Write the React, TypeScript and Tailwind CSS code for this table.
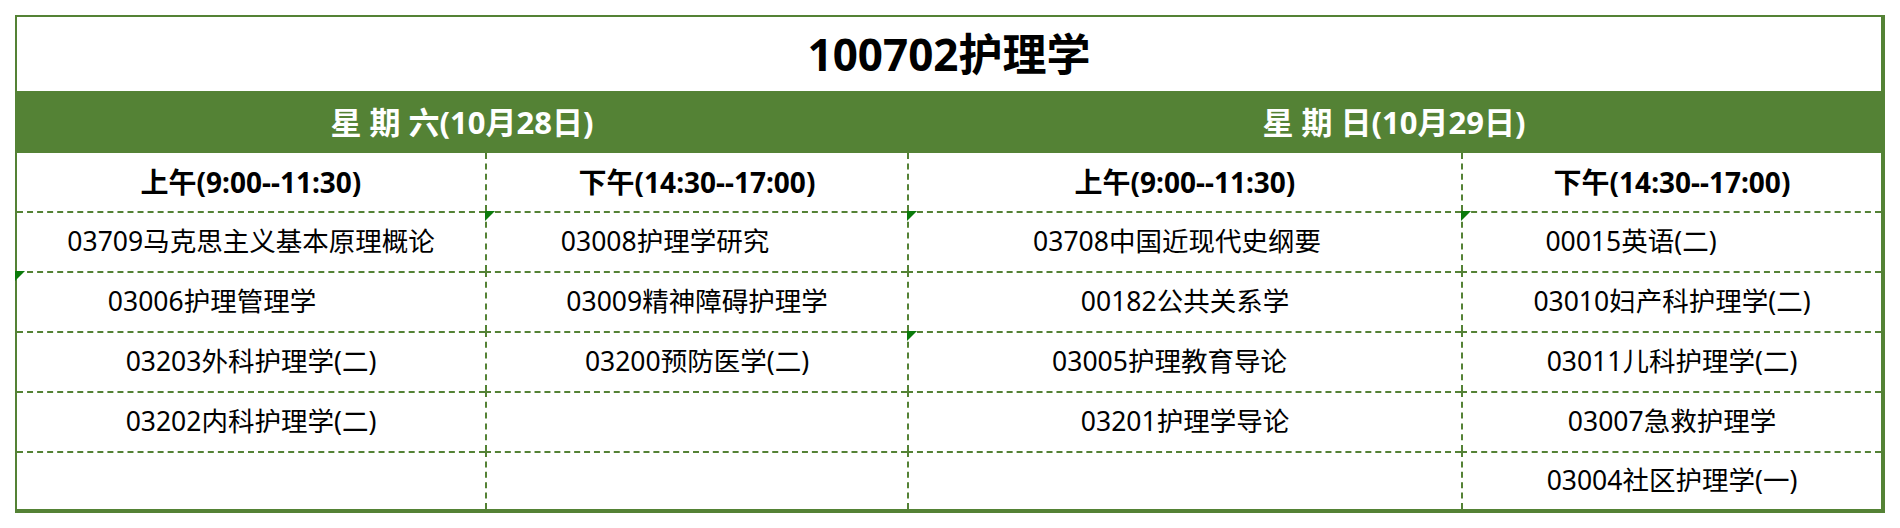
type Cell = { text: string; shift?: string; mark?: boolean };

const slots = ["上午(9:00--11:30)", "下午(14:30--17:00)", "上午(9:00--11:30)", "下午(14:30--17:00)"];

// 每行四格：周六上午、周六下午、周日上午、周日下午
const rows: Cell[][] = [
  [
    { text: "03709马克思主义基本原理概论" },
    { text: "03008护理学研究", shift: "pr-[64px]", mark: true },
    { text: "03708中国近现代史纲要", shift: "pr-[16px]", mark: true },
    { text: "00015英语(二)", shift: "pr-[82px]", mark: true },
  ],
  [
    { text: "03006护理管理学", shift: "pr-[78px]", mark: true },
    { text: "03009精神障碍护理学" },
    { text: "00182公共关系学" },
    { text: "03010妇产科护理学(二)" },
  ],
  [
    { text: "03203外科护理学(二)" },
    { text: "03200预防医学(二)" },
    { text: "03005护理教育导论", shift: "pr-[31px]", mark: true },
    { text: "03011儿科护理学(二)" },
  ],
  [
    { text: "03202内科护理学(二)" },
    { text: "" },
    { text: "03201护理学导论" },
    { text: "03007急救护理学" },
  ],
  [{ text: "" }, { text: "" }, { text: "" }, { text: "03004社区护理学(一)" }],
];

export default function App() {
  return (
    <main className="min-h-screen bg-white pt-[15px] pl-[15px] text-black font-['Noto_Sans','Noto_Sans_CJK_SC',sans-serif]">
      <div className="w-[1870px] border-l-2 border-t-2 border-r-4 border-b-4 border-[#548235]">
        <div className="grid grid-cols-[468px_422px_554px_420px]">
          {/* 标题 */}
          <div className="col-span-4 h-[74px] flex items-center justify-center text-[44px] font-bold">
            100702护理学
          </div>

          {/* 日期 */}
          <div className="col-span-2 h-[62px] bg-[#548235] flex items-center justify-center text-white text-[31px] font-bold">
            星 期 六(10月28日)
          </div>
          <div className="col-span-2 h-[62px] bg-[#548235] flex items-center justify-center text-white text-[31px] font-bold">
            星 期 日(10月29日)
          </div>

          {/* 时段 */}
          {slots.map((s, i) => (
            <div
              key={i}
              className={`h-[58px] flex items-center justify-center text-[28px] font-bold border-dashed border-[#548235] ${
                i > 0 ? "border-l-2" : ""
              }`}
            >
              {s}
            </div>
          ))}

          {/* 科目 */}
          {rows.map((row, r) =>
            row.map((c, i) => (
              <div
                key={`${r}-${i}`}
                className={`relative flex items-center justify-center text-[26.5px] border-t-2 border-dashed border-[#548235] ${
                  r === rows.length - 1 ? "h-[58px]" : "h-[60px]"
                } ${i > 0 ? "border-l-2" : ""} ${c.shift ?? ""}`}
              >
                {c.mark && (
                  <span className="absolute -top-[2px] -left-[2px] w-[10px] h-[10px] bg-[#0a7a0a] [clip-path:polygon(0_0,100%_0,0_100%)]" />
                )}
                {c.text}
              </div>
            ))
          )}
        </div>
      </div>
    </main>
  );
}
